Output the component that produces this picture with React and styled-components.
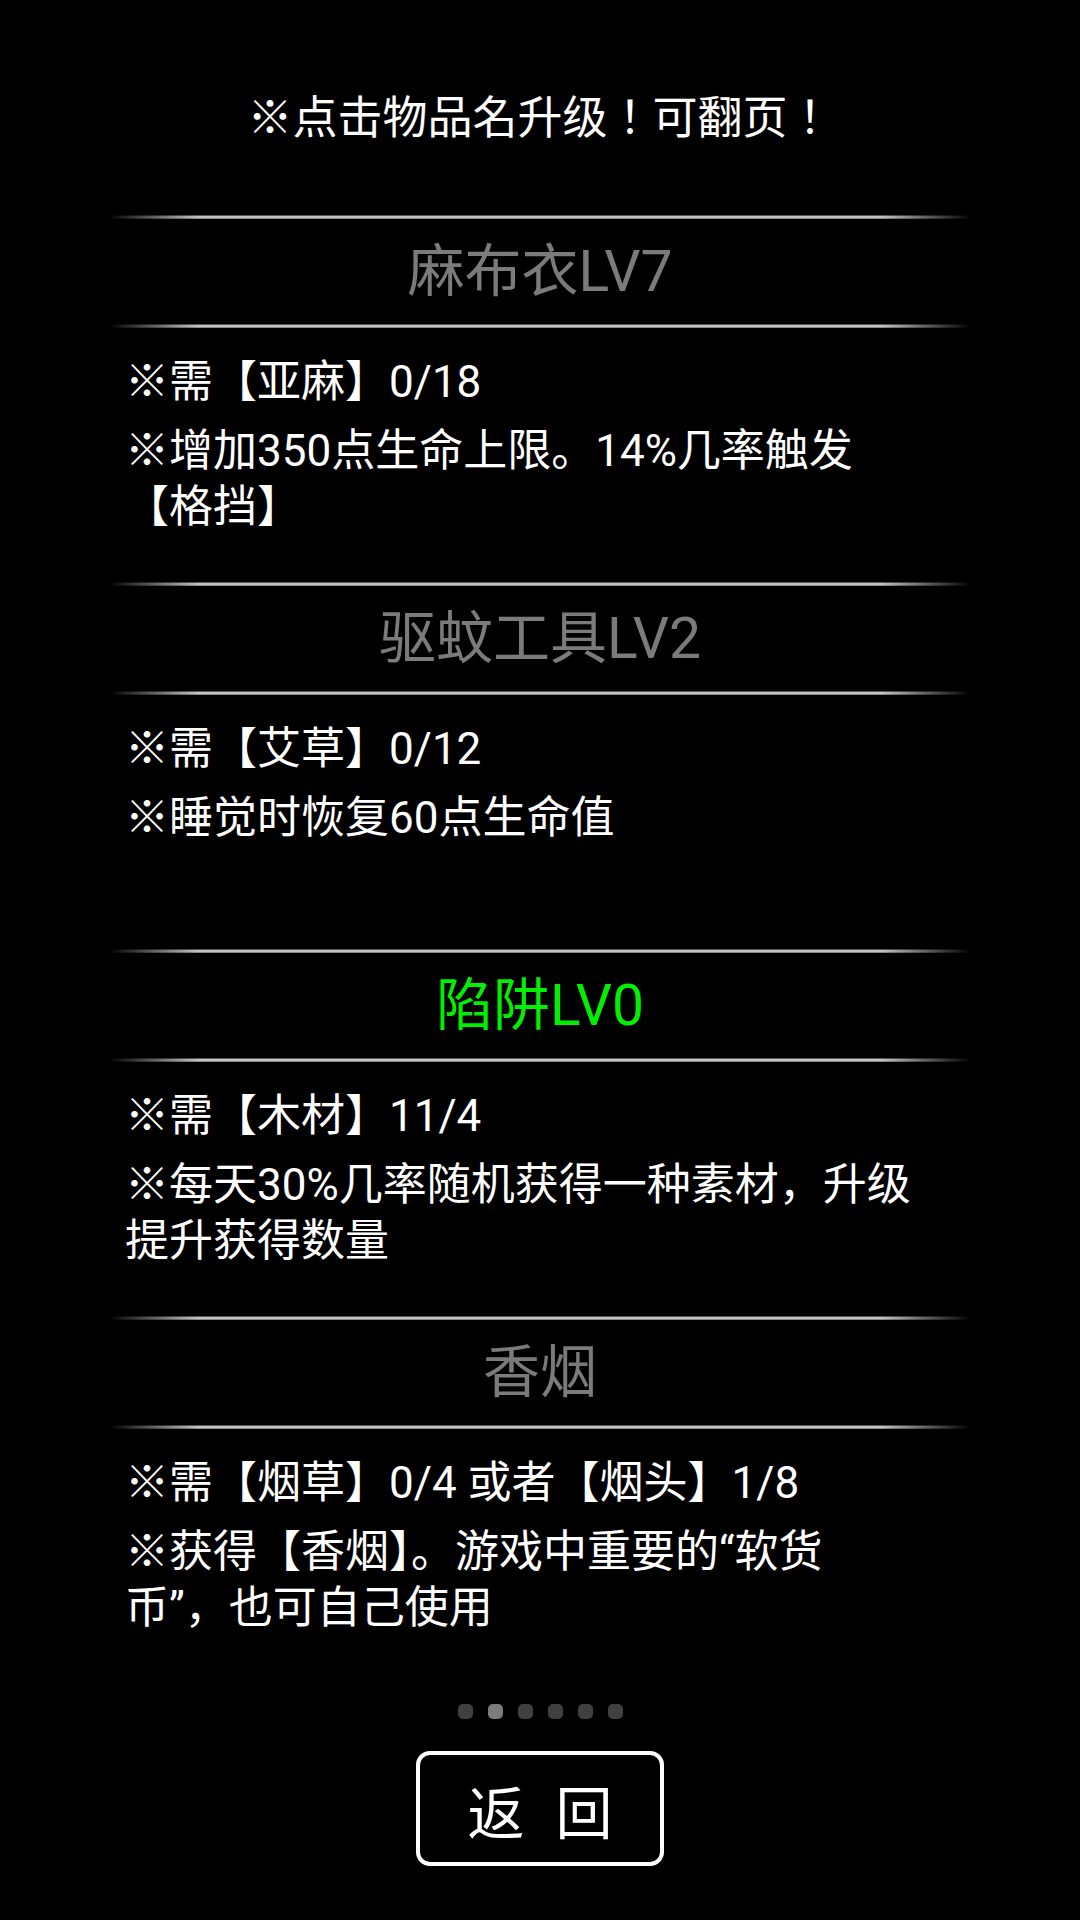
import React from 'react';
import styled, { createGlobalStyle } from 'styled-components';

const GlobalStyle = createGlobalStyle`
  html, body {
    margin: 0;
    padding: 0;
    background: #000;
  }
  body {
    font-family: Roboto, "Noto Sans CJK SC", sans-serif;
    color: #fff;
  }
`;

const Screen = styled.div`
  min-height: 1920px;
  background: #000;
  display: flex;
  flex-direction: column;
  align-items: center;
  padding-top: 91px;
  box-sizing: border-box;
`;

const Hint = styled.div`
  font-family: Roboto, "Noto Sans CJK JP", "Noto Sans CJK SC", sans-serif;
  font-size: 45px;
  line-height: 56px;
  color: #fff;
`;

const ItemList = styled.div`
  width: 862px;
  margin-top: 68px;
  display: flex;
  flex-direction: column;
`;

const Section = styled.section`
  height: 367px;
  display: flex;
  flex-direction: column;
`;

const Divider = styled.div`
  height: 4px;
  background: linear-gradient(
    to bottom,
    #5a5a5a 0,
    #5a5a5a 1px,
    #c4c4c4 1px,
    #c4c4c4 3px,
    #8a8a8a 3px
  );
  -webkit-mask-image: linear-gradient(to right, transparent 0, #000 90px, #000 calc(100% - 90px), transparent 100%);
  mask-image: linear-gradient(to right, transparent 0, #000 90px, #000 calc(100% - 90px), transparent 100%);
`;

const Title = styled.div`
  height: 105px;
  box-sizing: border-box;
  padding-bottom: 12px;
  display: flex;
  align-items: center;
  justify-content: center;
  font-size: 57px;
  color: ${p => (p.$ready ? '#00f000' : '#7b7b7b')};
  cursor: pointer;
`;

const Body = styled.div`
  flex: 1;
  padding: 26px 50px 0 16px;
`;

const Line = styled.p`
  margin: 0 0 13px;
  font-size: 44px;
  line-height: 56px;
  color: #fff;
`;

const Pager = styled.div`
  display: flex;
  gap: 15px;
  margin-top: 21px;
`;

const Dot = styled.span`
  width: 15px;
  height: 15px;
  border-radius: 5px;
  background: ${p => (p.$active ? '#7c7c7c' : '#404040')};
`;

const BackButton = styled.button`
  margin-top: 32px;
  width: 248px;
  height: 115px;
  box-sizing: border-box;
  border: 4px solid #fff;
  border-radius: 14px;
  background: #000;
  color: #fff;
  font-family: Roboto, "Noto Sans CJK SC", sans-serif;
  font-size: 57px;
  word-spacing: 17px;
  padding: 0;
  cursor: pointer;
`;

const items = [
  {
    name: '麻布衣LV7',
    ready: false,
    lines: ['※需【亚麻】0/18', '※增加350点生命上限。14%几率触发【格挡】'],
  },
  {
    name: '驱蚊工具LV2',
    ready: false,
    lines: ['※需【艾草】0/12', '※睡觉时恢复60点生命值'],
  },
  {
    name: '陷阱LV0',
    ready: true,
    lines: ['※需【木材】11/4', '※每天30%几率随机获得一种素材，升级提升获得数量'],
  },
  {
    name: '香烟',
    ready: false,
    lines: ['※需【烟草】0/4 或者【烟头】1/8', '※获得【香烟】。游戏中重要的“软货币”，也可自己使用'],
  },
];

const App = () => {
  return (
    <Screen>
      <GlobalStyle />
      <Hint>※点击物品名升级！可翻页！</Hint>
      <ItemList>
        {items.map(item => (
          <Section key={item.name}>
            <Divider />
            <Title $ready={item.ready}>{item.name}</Title>
            <Divider />
            <Body>
              {item.lines.map(line => (
                <Line key={line}>{line}</Line>
              ))}
            </Body>
          </Section>
        ))}
      </ItemList>
      <Pager>
        {[0, 1, 2, 3, 4, 5].map(i => (
          <Dot key={i} $active={i === 1} />
        ))}
      </Pager>
      <BackButton>返 回</BackButton>
    </Screen>
  );
};

export default App;
